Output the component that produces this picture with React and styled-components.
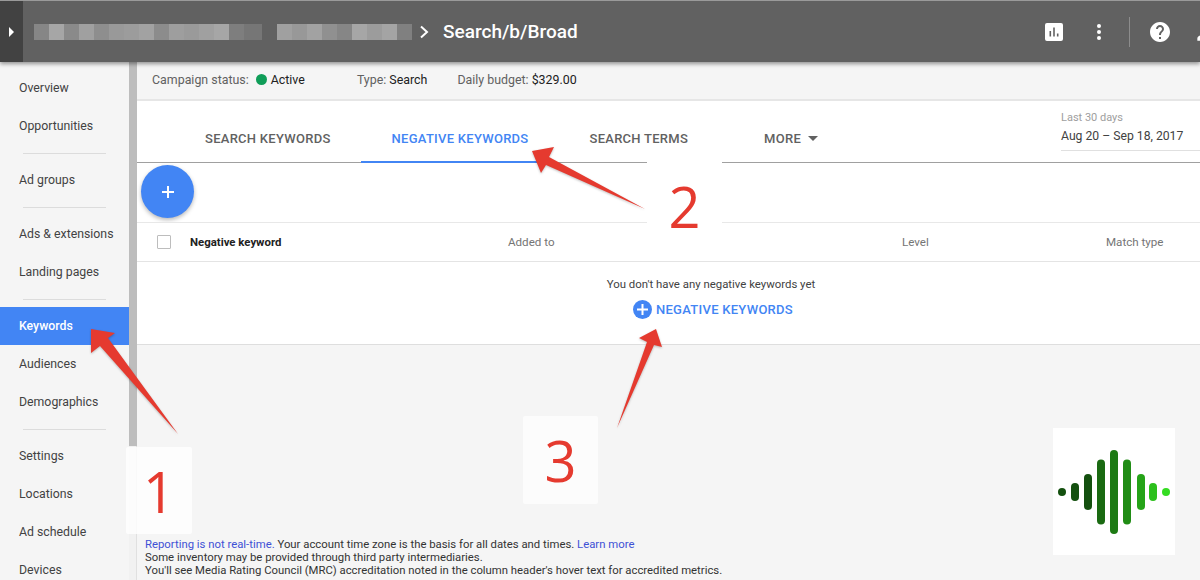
import React from "react";
import styled, { createGlobalStyle } from "styled-components";

const GlobalStyle = createGlobalStyle`
  html, body {
    margin: 0;
    padding: 0;
    background: #f5f5f5;
    font-family: Roboto, "Liberation Sans", sans-serif;
  }
  * { box-sizing: border-box; }
`;

const Page = styled.div`
  position: relative;
  width: 1200px;
  height: 580px;
  overflow: hidden;
  display: flex;
  flex-direction: column;
`;

const Header = styled.header`
  height: 62px;
  flex: none;
  display: flex;
  align-items: center;
  background: #616161;
  border-top: 1px solid #9a9a9a;
  box-shadow: 0 2px 4px rgba(0, 0, 0, 0.4);
  position: relative;
  z-index: 2;
  overflow: hidden;
`;

const Toggle = styled.div`
  width: 23px;
  height: 100%;
  background: #424242;
  display: flex;
  align-items: center;
  justify-content: center;
  margin-right: 11px;
`;

const Caret = styled.div`
  width: 0;
  height: 0;
  border-left: 5px solid #fff;
  border-top: 5px solid transparent;
  border-bottom: 5px solid transparent;
`;

const Blurred = styled.div`
  display: flex;
  height: 16px;
  margin-right: ${(p) => p.$gap}px;
`;

const BlurCell = styled.span`
  width: ${(p) => p.$w}px;
  background: ${(p) => p.$c};
`;

const Chevron = styled.svg`
  width: 12px;
  height: 14px;
  margin: 0 12px 0 7px;
`;

const Title = styled.div`
  color: #fff;
  font-size: 19px;
  font-weight: 500;
`;

const HeaderIcons = styled.div`
  margin-left: auto;
  margin-right: -19px;
  display: flex;
  align-items: center;
`;

const HeaderSvg = styled.svg`
  flex: none;
  width: ${(p) => p.$size}px;
  height: ${(p) => p.$size}px;
  margin-left: ${(p) => p.$left}px;
  fill: #fff;
`;

const HeaderDivider = styled.div`
  width: 1px;
  height: 30px;
  background: #8c8c8c;
  margin-left: 21px;
`;

const Body = styled.div`
  flex: 1;
  display: flex;
  min-height: 0;
`;

const Sidebar = styled.nav`
  width: 129px;
  flex: none;
  padding-top: 7px;
  background: #f5f5f5;
`;

const NavItem = styled.div`
  height: 38px;
  padding: 0 0 1px 19px;
  display: flex;
  align-items: center;
  font-size: 12.3px;
  color: ${(p) => (p.$active ? "#fff" : "#424242")};
  background: ${(p) => (p.$active ? "#4285f4" : "transparent")};
  font-weight: ${(p) => (p.$active ? 500 : 400)};
`;

const NavDivider = styled.div`
  height: 1px;
  margin: 8px 23px 7px 23px;
  background: #dcdcdc;
`;

const ScrollTrack = styled.div`
  width: 8px;
  flex: none;
  background: #f1f1f1;
  border-right: 1px solid #e0e0e0;
`;

const ScrollThumb = styled.div`
  height: 384px;
  width: 8px;
  background: #bdbdbd;
`;

const Main = styled.main`
  flex: 1;
  min-width: 0;
  display: flex;
  flex-direction: column;
`;

const StatusBar = styled.div`
  height: 39px;
  flex: none;
  display: flex;
  align-items: center;
  padding: 0 0 2px 15px;
  font-size: 12.4px;
  color: #616161;
  background: #f5f5f5;
  border-bottom: 2px solid #e6e6e6;
`;

const StatusItem = styled.div`
  display: flex;
  align-items: center;
  margin-right: ${(p) => p.$gap}px;
  white-space: pre;
`;

const StatusValue = styled.span`
  color: #212121;
`;

const StatusDot = styled.span`
  width: 11px;
  height: 11px;
  border-radius: 50%;
  background: #0f9d58;
  margin: 0 4px 0 7px;
`;

const TabStrip = styled.div`
  height: 62px;
  flex: none;
  display: flex;
  background: #fff;
  padding-left: 68px;
  border-bottom: 1px solid #a0a0a0;
`;

const Tab = styled.div`
  position: relative;
  display: flex;
  align-items: center;
  height: 100%;
  padding-top: 14px;
  margin-right: ${(p) => p.$gap}px;
  font-size: 13px;
  letter-spacing: 0.27px;
  font-weight: 500;
  white-space: nowrap;
  color: ${(p) => (p.$active ? "#4285f4" : "#616161")};

  ${(p) =>
    p.$active &&
    `&::after {
      content: "";
      position: absolute;
      left: -31px;
      right: -16px;
      bottom: -1px;
      height: 2px;
      background: #4285f4;
    }`}
`;

const MoreCaret = styled.span`
  width: 0;
  height: 0;
  margin-left: 7px;
  border-top: 5px solid #616161;
  border-left: 5px solid transparent;
  border-right: 5px solid transparent;
`;

const DateBlock = styled.div`
  margin-left: auto;
  width: 139px;
  height: 50px;
  padding-top: 10px;
  border-bottom: 1px solid #e0e0e0;
`;

const DateLabel = styled.div`
  font-size: 11px;
  line-height: 13px;
  color: #9e9e9e;
  margin-bottom: 5px;
`;

const DateValue = styled.div`
  font-size: 12.2px;
  line-height: 15px;
  color: #424242;
`;

const FabRow = styled.div`
  height: 59px;
  flex: none;
  background: #fff;
  padding: 2px 0 0 4px;
`;

const Fab = styled.div`
  width: 53px;
  height: 53px;
  border-radius: 50%;
  background: #4285f4;
  box-shadow: 0 2px 4px rgba(0, 0, 0, 0.28);
  display: flex;
  align-items: center;
  justify-content: center;
`;

const PlusSvg = styled.svg`
  width: ${(p) => p.$size}px;
  height: ${(p) => p.$size}px;
  stroke: #fff;
  stroke-width: ${(p) => p.$stroke};
  fill: none;
`;

const TableHead = styled.div`
  height: 40px;
  flex: none;
  display: flex;
  align-items: center;
  background: #fff;
  border-top: 1px solid #e8e8e8;
  border-bottom: 1px solid #e4e4e4;
`;

const Checkbox = styled.div`
  width: 14px;
  height: 14px;
  margin: 0 19px 0 20px;
  background: #fff;
  border: 1.5px solid #bdbdbd;
  border-radius: 1px;
`;

const HeadCell = styled.div`
  width: ${(p) => p.$w}px;
  flex: none;
  white-space: nowrap;
  font-size: ${(p) => (p.$strong ? 11.4 : 11.6)}px;
  color: ${(p) => (p.$strong ? "#212121" : "#757575")};
  font-weight: ${(p) => (p.$strong ? 700 : 400)};
`;

const EmptyState = styled.div`
  height: 83px;
  flex: none;
  background: #fff;
  border-bottom: 1px solid #dedede;
  display: flex;
  flex-direction: column;
  align-items: center;
  padding: 15px 2px 0 87px;
  font-size: 11.4px;
  color: #424242;
`;

const AddLink = styled.div`
  display: flex;
  align-items: center;
  margin: 9px 0 0 4px;
  color: #4285f4;
  font-size: 13px;
  letter-spacing: 0.27px;
  font-weight: 500;
`;

const AddCircle = styled.span`
  width: 19px;
  height: 19px;
  border-radius: 50%;
  background: #4285f4;
  display: flex;
  align-items: center;
  justify-content: center;
  margin-right: 4px;
`;

const Footer = styled.footer`
  margin-top: auto;
  padding: 0 0 3px 8px;
  font-size: 11.33px;
  line-height: 13px;
  color: #333;
`;

const FooterLink = styled.span`
  color: #3f51d5;
`;

/* annotations pasted on top of the screenshot */
const Patch = styled.div`
  position: absolute;
  left: ${(p) => p.$x}px;
  top: ${(p) => p.$y}px;
  width: ${(p) => p.$w}px;
  height: ${(p) => p.$h}px;
  padding-top: ${(p) => p.$pad || 0}px;
  background: ${(p) => p.$bg};
  border-radius: 2px;
  z-index: 3;
  display: flex;
  justify-content: center;
  align-items: center;
`;

const Digit = styled.span`
  font-family: "Open Sans", Roboto, sans-serif;
  font-size: 56px;
  line-height: 56px;
  font-weight: 400;
  color: #e53a2f;
`;

const ArrowLayer = styled.svg`
  position: absolute;
  inset: 0;
  width: 1200px;
  height: 580px;
  z-index: 4;
  pointer-events: none;
  filter: drop-shadow(0.5px 1px 1px rgba(0, 0, 0, 0.25));
`;

const LogoBox = styled.svg`
  position: absolute;
  left: 1053px;
  top: 428px;
  width: 122px;
  height: 127px;
  background: #fff;
  z-index: 3;
`;

const blurA = ["#868686", "#a6a6a6", "#8a8a8a", "#a0a0a0", "#8e8e8e", "#999", "#9c9c9c", "#a2a2a2", "#8c8c8c", "#9e9e9e", "#9a9a9a", "#a0a0a0", "#a6a6a6", "#7e7e7e", "#767676"];
const blurB = ["#a0a0a0", "#989898", "#a2a2a2", "#909090", "#868686", "#a6a6a6", "#9c9c9c", "#a4a4a4", "#808080"];

const navGroups = [
  ["Overview", "Opportunities"],
  ["Ad groups"],
  ["Ads & extensions", "Landing pages"],
  ["Keywords", "Audiences", "Demographics"],
  ["Settings", "Locations", "Ad schedule", "Devices"],
];

const bars = [
  [9, 8, "#14500f"],
  [22, 18, "#14500f"],
  [35, 36, "#14500f"],
  [48, 65, "#1a6a12"],
  [61, 84, "#1d7a14"],
  [74, 65, "#208c15"],
  [88, 36, "#25a318"],
  [100, 18, "#2cc01c"],
  [113, 8, "#35dc22"],
];

export default function App() {
  return (
    <Page>
      <GlobalStyle />
      <Header>
        <Toggle><Caret /></Toggle>
        <Blurred $gap={15}>
          {blurA.map((c, i) => <BlurCell key={i} $w={i === 14 ? 18 : 15} $c={c} />)}
        </Blurred>
        <Blurred $gap={0}>
          {blurB.map((c, i) => <BlurCell key={i} $w={15} $c={c} />)}
        </Blurred>
        <Chevron viewBox="0 0 12 14"><path d="M2 1.5 8 7l-6 5.5" stroke="#fff" strokeWidth="2" fill="none" /></Chevron>
        <Title>Search/b/Broad</Title>
        <HeaderIcons>
          <HeaderSvg $size={18} $left={0} viewBox="0 0 18 18">
            <path fillRule="evenodd" d="M2 0h14a2 2 0 0 1 2 2v14a2 2 0 0 1-2 2H2a2 2 0 0 1-2-2V2a2 2 0 0 1 2-2zM4.5 8v5.5h1.6V8zM8.2 4.5v9h1.6v-9zM11.9 10.5v3h1.6v-3z" />
          </HeaderSvg>
          <HeaderSvg $size={18} $left={27} viewBox="0 0 18 18">
            <circle cx="9" cy="3" r="2" />
            <circle cx="9" cy="9" r="2" />
            <circle cx="9" cy="15" r="2" />
          </HeaderSvg>
          <HeaderDivider />
          <HeaderSvg $size={24} $left={18} viewBox="0 0 24 24">
            <path d="M12 2C6.48 2 2 6.48 2 12s4.48 10 10 10 10-4.48 10-10S17.52 2 12 2zm1 17h-2v-2h2v2zm2.07-7.75-.9.92C13.45 12.9 13 13.5 13 15h-2v-.5c0-1.1.45-2.1 1.17-2.83l1.24-1.26c.37-.36.59-.86.59-1.41 0-1.1-.9-2-2-2s-2 .9-2 2H8c0-2.21 1.79-4 4-4s4 1.79 4 4c0 .88-.36 1.68-.93 2.25z" />
          </HeaderSvg>
          <HeaderSvg $size={26} $left={21} viewBox="0 0 24 24">
            <path d="M12 12c2.21 0 4-1.79 4-4s-1.79-4-4-4-4 1.79-4 4 1.79 4 4 4zm0 2c-2.67 0-8 1.34-8 4v2h16v-2c0-2.66-5.33-4-8-4z" />
          </HeaderSvg>
        </HeaderIcons>
      </Header>

      <Body>
        <Sidebar>
          {navGroups.map((group, i) => (
            <React.Fragment key={i}>
              {i > 0 && <NavDivider />}
              {group.map((item) => (
                <NavItem key={item} $active={item === "Keywords"}>{item}</NavItem>
              ))}
            </React.Fragment>
          ))}
        </Sidebar>
        <ScrollTrack><ScrollThumb /></ScrollTrack>
        <Main>
          <StatusBar>
            <StatusItem $gap={52}>Campaign status:<StatusDot /><StatusValue>Active</StatusValue></StatusItem>
            <StatusItem $gap={30}>Type: <StatusValue>Search</StatusValue></StatusItem>
            <StatusItem $gap={0}>Daily budget: <StatusValue>$329.00</StatusValue></StatusItem>
          </StatusBar>

          <TabStrip>
            <Tab $gap={61}>SEARCH KEYWORDS</Tab>
            <Tab $gap={61} $active>NEGATIVE KEYWORDS</Tab>
            <Tab $gap={76}>SEARCH TERMS</Tab>
            <Tab $gap={0}>MORE<MoreCaret /></Tab>
            <DateBlock>
              <DateLabel>Last 30 days</DateLabel>
              <DateValue>Aug 20 – Sep 18, 2017</DateValue>
            </DateBlock>
          </TabStrip>

          <FabRow>
            <Fab>
              <PlusSvg $size={14} $stroke={2} viewBox="0 0 14 14"><path d="M7 1v12M1 7h12" /></PlusSvg>
            </Fab>
          </FabRow>

          <TableHead>
            <Checkbox />
            <HeadCell $w={318} $strong>Negative keyword</HeadCell>
            <HeadCell $w={394}>Added to</HeadCell>
            <HeadCell $w={204}>Level</HeadCell>
            <HeadCell $w={70}>Match type</HeadCell>
          </TableHead>

          <EmptyState>
            <div>You don't have any negative keywords yet</div>
            <AddLink>
              <AddCircle>
                <PlusSvg $size={11} $stroke={2} viewBox="0 0 11 11"><path d="M5.5 0v11M0 5.5h11" /></PlusSvg>
              </AddCircle>
              NEGATIVE KEYWORDS
            </AddLink>
          </EmptyState>

          <Footer>
            <div><FooterLink>Reporting is not real-time.</FooterLink> Your account time zone is the basis for all dates and times. <FooterLink>Learn more</FooterLink></div>
            <div>Some inventory may be provided through third party intermediaries.</div>
            <div>You'll see Media Rating Council (MRC) accreditation noted in the column header's hover text for accredited metrics.</div>
          </Footer>
        </Main>
      </Body>

      <Patch $x={126} $y={447} $w={66} $h={87} $bg="rgba(255,255,255,0.8)"><Digit>1</Digit></Patch>
      <Patch $x={647} $y={160} $w={75} $h={66} $pad={26} $bg="#fff"><Digit>2</Digit></Patch>
      <Patch $x={523} $y={416} $w={75} $h={88} $bg="#fcfcfc"><Digit>3</Digit></Patch>

      <ArrowLayer viewBox="0 0 1200 580">
        <g fill="#e53a2f">
          <path d="M91 329 115 333 108 338 178 434 100 346 91 353Z" />
          <path d="M532 151 554 147 549 157 645 209 546 165 541 173Z" />
          <path d="M656 329 639 338 647 342 617 428 654 345 662 347Z" />
        </g>
      </ArrowLayer>

      <LogoBox viewBox="0 0 122 127">
        {bars.map(([x, h, c]) => (
          <rect key={x} x={x - 4} y={64 - h / 2} width="8" height={h} rx="4" fill={c} />
        ))}
      </LogoBox>
    </Page>
  );
}
